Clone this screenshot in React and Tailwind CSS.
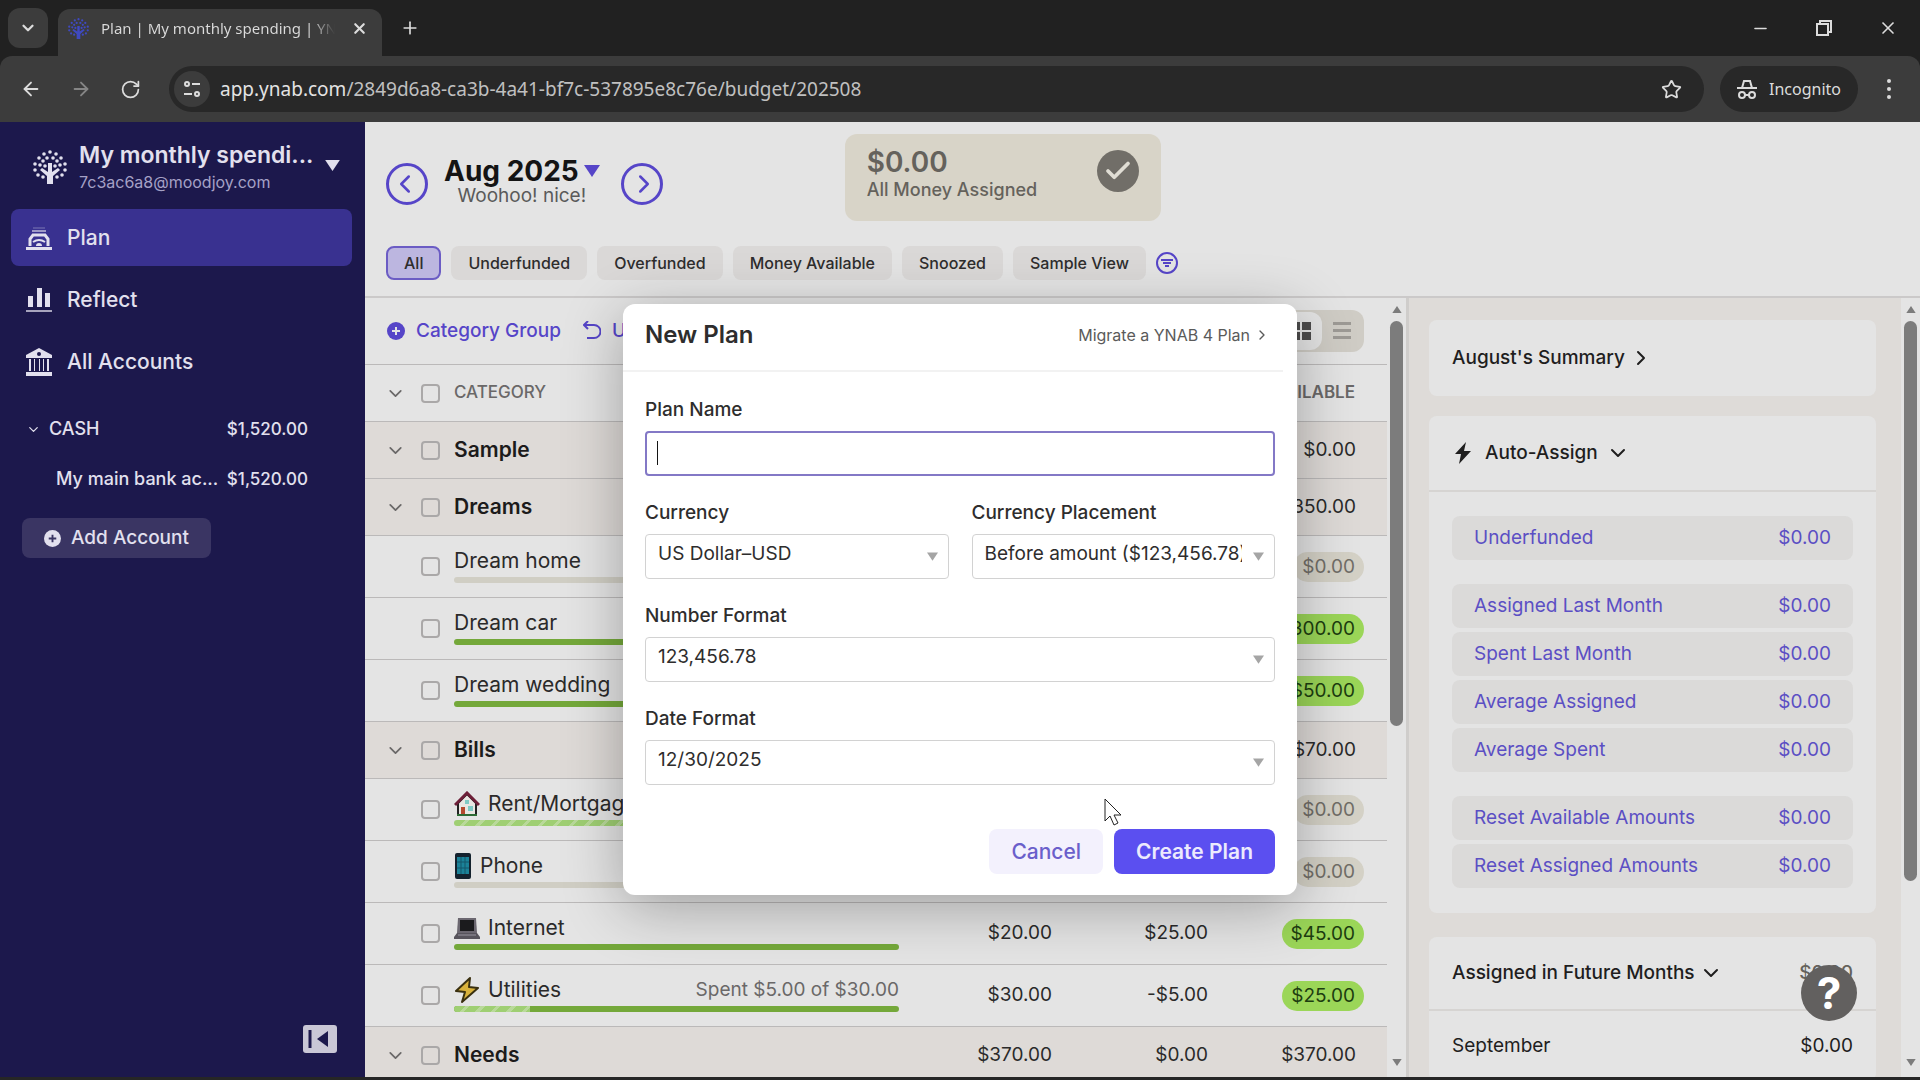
import React, { useState } from "react";
import {
  ArrowLeft,
  ArrowRight,
  Check,
  ChevronDown,
  ChevronLeft,
  ChevronRight,
  Minus,
  Plus,
  RotateCw,
  Star,
  X
} from "lucide-react";

const GROUP = "group";
const FUNDED = "funded";

const ROWS = [
  { type: GROUP, name: "Sample", available: "$0.00" },
  { type: GROUP, name: "Dreams", available: "$350.00" },
  { name: "Dream home", available: "$0.00" },
  { name: "Dream car", available: "$300.00", status: FUNDED },
  { name: "Dream wedding", available: "$50.00", status: FUNDED },
  { type: GROUP, name: "Bills", available: "$70.00" },
  { name: "Rent/Mortgage", icon: <House />, available: "$0.00", spent: 100 },
  { name: "Phone", icon: <Phone />, available: "$0.00" },
  {
    name: "Internet",
    icon: <Laptop />,
    assigned: "$20.00",
    activity: "$25.00",
    available: "$45.00",
    status: FUNDED
  },
  {
    name: "Utilities",
    icon: <Bolt />,
    note: "Spent $5.00 of $30.00",
    assigned: "$30.00",
    activity: "-$5.00",
    available: "$25.00",
    status: FUNDED,
    spent: 17
  },
  {
    type: GROUP,
    name: "Needs",
    assigned: "$370.00",
    activity: "$0.00",
    available: "$370.00"
  }
];

const FILTERS = [
  "All",
  "Underfunded",
  "Overfunded",
  "Money Available",
  "Snoozed",
  "Sample View"
];

const AUTO_ASSIGN = [
  ["Underfunded"],
  [
    "Assigned Last Month",
    "Spent Last Month",
    "Average Assigned",
    "Average Spent"
  ],
  ["Reset Available Amounts", "Reset Assigned Amounts"]
];

function Tree({ className }) {
  return (
    <svg viewBox="0 0 34 34" className={className} fill="currentColor">
      <path d="M14 34V26L7 20l2-2 6 4V13h4v9l6-4 2 2-7 6v8z" />
      <circle cx="17" cy="2" r="1.8" />
      <circle cx="11" cy="4" r="1.8" />
      <circle cx="23" cy="4" r="1.8" />
      <circle cx="6" cy="8" r="1.8" />
      <circle cx="28" cy="8" r="1.8" />
      <circle cx="14" cy="8" r="1.8" />
      <circle cx="20" cy="8" r="1.8" />
      <circle cx="2" cy="14" r="1.8" />
      <circle cx="32" cy="14" r="1.8" />
      <circle cx="10" cy="11" r="1.8" />
      <circle cx="24" cy="11" r="1.8" />
      <circle cx="7" cy="15" r="1.8" />
      <circle cx="27" cy="15" r="1.8" />
      <circle cx="12" cy="16" r="1.8" />
      <circle cx="22" cy="16" r="1.8" />
      <circle cx="2" cy="20" r="1.8" />
      <circle cx="32" cy="20" r="1.8" />
      <circle cx="5" cy="25" r="1.8" />
      <circle cx="29" cy="25" r="1.8" />
      <circle cx="10" cy="27" r="1.8" />
      <circle cx="24" cy="27" r="1.8" />
    </svg>
  );
}

function House() {
  return (
    <svg viewBox="0 0 26 26" className="h-[26px] w-[26px] shrink-0">
      <path d="M4 12L13 3l9 9v12H4z" fill="#e9e6e2" stroke="#222" strokeWidth="2" />
      <path d="M1 14L13 2l12 12" fill="none" stroke="#6d1f38" strokeWidth="3" />
      <path d="M7 16h4v8H7z" fill="#b5482e" />
      <path d="M14 15h5v5h-5zM11 9h4v4h-4z" fill="#7fc9c4" />
      <path d="M3 24h20" stroke="#2d6b35" strokeWidth="2" />
    </svg>
  );
}

function Phone() {
  return (
    <svg viewBox="0 0 18 26" className="h-[26px] w-[18px] shrink-0">
      <rect x="1" width="16" height="26" rx="2" fill="#14222e" />
      <rect x="3" y="4" width="12" height="17" fill="#1b8298" />
      <path d="M7 4v17M11 4v17M3 9h12M3 15h12" stroke="#14566a" />
    </svg>
  );
}

function Laptop() {
  return (
    <svg viewBox="0 0 26 26" className="h-[26px] w-[26px] shrink-0">
      <path d="M4 3h18l1 15H3z" fill="#6b6770" />
      <path d="M6 5h14v11H6z" fill="#1b1b1d" />
      <path d="M3 18h20l3 4v2H0v-2z" fill="#57545c" />
      <path d="M4 20h18" stroke="#98949e" />
    </svg>
  );
}

function Bolt() {
  return (
    <svg viewBox="0 0 26 26" className="h-[26px] w-[26px] shrink-0">
      <path
        d="M16 1L2 14l9 1-3 10 16-14-9-1z"
        fill="#d9b23c"
        stroke="#3a3010"
        strokeWidth="2"
        strokeLinejoin="round"
      />
    </svg>
  );
}

function Triangle({ className }) {
  return (
    <svg viewBox="0 0 16 12" className={className} fill="currentColor">
      <path d="M0 0h16L8 12z" />
    </svg>
  );
}

function PlusCircle({ className }) {
  return (
    <svg viewBox="0 0 18 18" className={className}>
      <circle cx="9" cy="9" r="9" fill="currentColor" stroke="none" />
      <path d="M9 5v8M5 9h8" strokeWidth="2" />
    </svg>
  );
}

function Browser() {
  return (
    <header className="shrink-0 bg-[#212121] font-['Noto_Sans',sans-serif] text-[#dcdcdc]">
      <div className="flex h-14 items-end">
        <button
          aria-label="Search tabs"
          className="mb-2 ml-2 flex h-10 w-10 items-center justify-center rounded-xl bg-[#3c3c3c]"
        >
          <ChevronDown size={18} strokeWidth={3} />
        </button>
        <div className="ml-[10px] flex h-[47px] w-[324px] items-center rounded-t-xl bg-[#3c3c3c] pb-2 pl-[10px] pr-[14px]">
          <Tree className="h-[21px] w-[21px] shrink-0 text-[#3f49c0]" />
          <div className="ml-3 min-w-0 grow overflow-hidden whitespace-nowrap bg-gradient-to-r from-[#dcdcdc] from-90% to-[#3c3c3c] bg-clip-text text-[15px] text-transparent">
            Plan | My monthly spending | YNAB
          </div>
          <button aria-label="Close tab" className="ml-4 shrink-0">
            <X size={17} strokeWidth={3} />
          </button>
        </div>
        <button aria-label="New tab" className="mb-[18px] ml-[18px]">
          <Plus size={20} strokeWidth={2} />
        </button>
        <div className="mb-[18px] ml-auto mr-[22px] flex items-center gap-[46px]">
          <button aria-label="Minimize">
            <Minus size={19} strokeWidth={2} />
          </button>
          <button aria-label="Restore">
            <svg viewBox="0 0 16 16" className="h-4 w-4" fill="none" stroke="currentColor" strokeWidth="2">
              <path d="M1 4h11v11H1zM4 4V1h11v11h-3" />
            </svg>
          </button>
          <button aria-label="Close">
            <X size={20} strokeWidth={2} />
          </button>
        </div>
      </div>
      <div className="flex h-[66px] items-center rounded-t-xl bg-[#3c3c3c] pl-5 pr-7">
        <button aria-label="Back">
          <ArrowLeft size={22} />
        </button>
        <button aria-label="Forward" className="ml-7 text-[#858585]">
          <ArrowRight size={22} />
        </button>
        <button aria-label="Reload" className="ml-7">
          <RotateCw size={21} />
        </button>
        <div className="ml-7 flex h-[46px] grow items-center rounded-full bg-[#282828] pl-[5px] pr-[22px]">
          <button
            aria-label="Site information"
            className="flex h-9 w-9 items-center justify-center rounded-full bg-[#3c3c3c]"
          >
            <svg viewBox="0 0 18 18" className="h-[18px] w-[18px]" fill="none" stroke="currentColor" strokeWidth="2">
              <circle cx="4" cy="4" r="2" />
              <circle cx="14" cy="14" r="2" />
              <path d="M9 4h8M1 14h8" />
            </svg>
          </button>
          <div className="ml-[10px] grow text-[19px] text-[#c0c0c0]">
            <span className="text-[#e3e3e3]">app.ynab.com</span>
            /2849d6a8-ca3b-4a41-bf7c-537895e8c76e/budget/202508
          </div>
          <button aria-label="Bookmark">
            <Star size={21} />
          </button>
        </div>
        <div className="ml-4 flex h-[46px] items-center gap-3 rounded-full bg-[#282828] pl-[17px] pr-[17px] text-base">
          <svg viewBox="0 0 20 20" className="h-5 w-5" fill="none" stroke="currentColor" strokeWidth="2">
            <path d="M5 9l2-7h6l2 7M0 9h20" />
            <circle cx="5" cy="16" r="3" />
            <circle cx="15" cy="16" r="3" />
            <path d="M8 16h4" />
          </svg>
          Incognito
        </div>
        <button aria-label="Menu" className="ml-7">
          <svg viewBox="0 0 6 22" className="h-[22px] w-[6px]" fill="currentColor">
            <circle cx="3" cy="3" r="2" />
            <circle cx="3" cy="11" r="2" />
            <circle cx="3" cy="19" r="2" />
          </svg>
        </button>
      </div>
    </header>
  );
}

function Sidebar() {
  return (
    <nav className="flex w-[365px] shrink-0 flex-col bg-[#1c184c] px-[11px] text-[#e2e0ee]">
      <button className="mt-[18px] flex h-[69px] items-start pl-[22px] text-left">
        <Tree className="mt-[10px] h-[34px] w-[34px] shrink-0" />
        <div className="ml-3 w-[237px] whitespace-nowrap">
          <div className="text-[23px] font-semibold leading-[30px]">
            My monthly spendi...
          </div>
          <div className="text-base leading-6 text-[#a5a1c6]">
            7c3ac6a8@moodjoy.com
          </div>
        </div>
        <Triangle className="ml-2 mt-5 h-[11px] w-[17px]" />
      </button>
      <div className="flex flex-col gap-[5px] text-[21px] font-medium">
        <a href="#plan" className="mr-[2px] flex h-[57px] items-center gap-[15px] rounded-lg bg-[#393190] pl-[15px]">
          <svg viewBox="0 0 26 24" className="h-6 w-[26px]" fill="none">
            <path d="M7 2h12" stroke="currentColor" opacity=".4" />
            <path d="M6 5h14" stroke="currentColor" strokeWidth="2" opacity=".6" />
            <path d="M4 20v-7l3-4h12l3 4v7" stroke="currentColor" strokeWidth="3" />
            <path d="M7 16q6-4 12 0" stroke="currentColor" strokeWidth="2" />
            <path d="M10 20a3 3 0 0 1 6 0z" fill="currentColor" />
            <path d="M0 21h26v3H0z" fill="currentColor" />
          </svg>
          Plan
        </a>
        <a href="#reflect" className="flex h-[57px] items-center gap-[15px] pl-[15px]">
          <svg viewBox="0 0 26 24" className="h-6 w-[26px]" fill="currentColor">
            <path d="M2 8h5v11H2zM11 0h5v19h-5zM19 5h5v14h-5z" />
            <path d="M0 22h26v2H0z" opacity=".7" />
          </svg>
          Reflect
        </a>
        <a href="#accounts" className="flex h-[57px] items-center gap-[15px] pl-[15px]">
          <svg viewBox="0 0 26 28" className="h-7 w-[26px]" fill="currentColor">
            <path d="M13 0l13 7v3H0V7z" />
            <path d="M3 11h2v12H3zM8 11h1v12H8zM13 11h1v12h-1zM17 11h1v12h-1zM21 11h2v12h-2z" />
            <path d="M0 24h26v4H0z" />
            <circle cx="13" cy="6" r="2" fill="#1c184c" />
          </svg>
          All Accounts
        </a>
      </div>
      <button className="mt-6 flex h-[30px] items-center pl-[15px] pr-[46px] text-lg font-medium">
        <ChevronDown size={15} className="mr-2" />
        CASH
        <span className="ml-auto text-[17px]">$1,520.00</span>
      </button>
      <a href="#bank" className="mt-5 flex h-[30px] items-center whitespace-nowrap pl-[45px] pr-[46px] text-lg font-medium">
        My main bank ac...
        <span className="ml-auto text-[17px]">$1,520.00</span>
      </a>
      <button className="ml-[11px] mt-6 flex h-10 w-[189px] items-center gap-[10px] rounded-lg bg-[#3a3563] pl-[22px] text-[19px] font-medium">
        <PlusCircle className="h-[17px] w-[17px] stroke-[#3a3563]" />
        Add Account
      </button>
      <button aria-label="Collapse sidebar" className="mb-6 ml-auto mr-[17px] mt-auto">
        <svg viewBox="0 0 34 28" className="h-7 w-[34px]">
          <rect width="34" height="28" rx="3" fill="#c9c7d6" />
          <path d="M7 5v18" stroke="#1c184c" strokeWidth="3" />
          <path d="M25 6v16l-11-8z" fill="#1c184c" />
        </svg>
      </button>
    </nav>
  );
}

function PlanHeader() {
  const [filter, setFilter] = useState("All");

  return (
    <div className="h-[176px] shrink-0 border-b-2 border-[#cbc9c9] px-[21px] pt-3">
      <div className="flex h-[87px] items-start">
        <button
          aria-label="Previous month"
          className="mt-[29px] flex h-[42px] w-[42px] items-center justify-center rounded-full border-3 border-[#5645c8] text-[#5645c8]"
        >
          <ChevronLeft size={30} className="-ml-1" />
        </button>
        <div className="ml-4 mt-5 text-center">
          <button className="flex items-center text-[28px] font-bold leading-[34px] text-[#141414]">
            Aug 2025
            <Triangle className="ml-[5px] h-3 w-4 text-[#5645c8]" />
          </button>
          <div className="-mt-1 text-[19px] leading-6 text-[#5a5a5a]">
            Woohoo! nice!
          </div>
        </div>
        <button
          aria-label="Next month"
          className="ml-[21px] mt-[29px] flex h-[42px] w-[42px] items-center justify-center rounded-full border-3 border-[#5645c8] text-[#5645c8]"
        >
          <ChevronRight size={30} className="-mr-1" />
        </button>
        <div className="ml-[182px] flex h-[87px] w-[316px] justify-between rounded-xl bg-[#d8d4c8] px-[22px] pt-3 text-[#65625c]">
          <div>
            <div className="text-[28px] font-semibold leading-8">$0.00</div>
            <div className="text-lg font-medium leading-6">
              All Money Assigned
            </div>
          </div>
          <div className="mt-1 flex h-[42px] w-[42px] items-center justify-center rounded-full bg-[#716e68] text-[#e0ddd4]">
            <Check size={30} strokeWidth={3} />
          </div>
        </div>
      </div>
      <div className="mt-[25px] flex items-center gap-[10px] text-base font-medium text-[#2e2d2d]">
        {FILTERS.map((name) => (
          <button
            key={name}
            onClick={() => setFilter(name)}
            className={
              name === filter
                ? "h-[34px] rounded-lg border-2 border-[#6b5cc4] bg-[#bcb6e0] px-4"
                : "h-[34px] rounded-lg bg-[#dad8d7] px-[17px]"
            }
          >
            {name}
          </button>
        ))}
        <button aria-label="Edit views" className="text-[#5645c8]">
          <svg viewBox="0 0 22 22" className="h-[22px] w-[22px]" fill="none" stroke="currentColor" strokeWidth="2">
            <circle cx="11" cy="11" r="10" />
            <path d="M5 8h12M7 11h8M9 14h4" />
          </svg>
        </button>
      </div>
    </div>
  );
}

function Box({ label }) {
  return (
    <input
      type="checkbox"
      aria-label={label}
      className="block h-[19px] w-[19px] appearance-none rounded-[4px] border-2 border-[#aaa8a8]"
    />
  );
}

function Progress({ status, spent }) {
  return (
    <div
      className={
        "mt-[2px] h-[6px] overflow-hidden rounded-full " +
        (status === FUNDED ? "bg-[#74a83a]" : "bg-[#d0cec4]")
      }
    >
      {spent && (
        <div
          className="h-full bg-[repeating-linear-gradient(135deg,#9fcf73_0_8px,#b9d99a_8px_11px)]"
          style={{ width: spent + "%" }}
        />
      )}
    </div>
  );
}

function Amount({ status, children }) {
  return (
    <span
      className={
        "inline-block h-[30px] rounded-full px-[9px] leading-[30px] " +
        (status === FUNDED
          ? "bg-[#9bd658] text-[#1d3d10]"
          : "bg-[#d4d1c6] text-[#716e68]")
      }
    >
      {children}
    </span>
  );
}

function Scrollbar({ className }) {
  return (
    <div className="flex w-[19px] shrink-0 flex-col items-center bg-[#e4e4e4] text-[#7c7c7c]">
      <Triangle className="mt-2 h-[7px] w-3 rotate-180" />
      <div className={className} />
      <Triangle className="mb-[11px] mt-auto h-[7px] w-3" />
    </div>
  );
}

function Budget() {
  return (
    <div className="flex min-h-0 grow">
      <div className="min-w-0 grow overflow-hidden">
        <div className="flex h-[66px] items-center pl-[22px] pr-[23px] text-[19px] font-medium text-[#5645c8]">
          <button className="flex items-center gap-[11px]">
            <PlusCircle className="h-[18px] w-[18px] stroke-[#e4e4e4]" />
            Category Group
          </button>
          <button className="ml-[22px] flex items-center gap-[11px]">
            <svg viewBox="0 0 18 20" className="h-5 w-[18px]" fill="none" stroke="currentColor" strokeWidth="2">
              <path d="M2 4h9a6 6 0 0 1 0 13H4" />
              <path d="M5 0L1 4l4 4" />
            </svg>
            Undo
          </button>
          <div className="ml-auto flex h-[42px] w-[86px] items-center rounded-xl bg-[#cfccc5] p-[2px] text-[#4d4c4c]">
            <button
              aria-label="Card view"
              className="flex h-full w-[42px] items-center justify-center rounded-xl bg-[#e4e4e4]"
            >
              <svg viewBox="0 0 20 18" className="h-[18px] w-5" fill="currentColor">
                <path d="M0 0h9v8H0zM11 0h9v8h-9zM0 10h9v8H0zM11 10h9v8h-9z" />
              </svg>
            </button>
            <button aria-label="List view" className="flex grow justify-center text-[#9d9a95]">
              <svg viewBox="0 0 18 18" className="h-[18px] w-[18px]" fill="currentColor">
                <path d="M0 0h18v3H0zM0 7h18v3H0zM0 14h18v3H0z" />
              </svg>
            </button>
          </div>
        </div>
        <table className="w-full table-fixed text-left text-[#2b2a2a]">
          <colgroup>
            <col className="w-[56px]" />
            <col className="w-[33px]" />
            <col />
            <col className="w-[153px]" />
            <col className="w-[156px]" />
            <col className="w-[179px]" />
          </colgroup>
          <thead>
            <tr className="h-[57px] border-y border-[#bbb9b9] text-[17px] text-[#6a6868]">
              <td className="pl-5">
                <ChevronDown size={21} />
              </td>
              <td>
                <Box label="Select all" />
              </td>
              <th className="font-medium">CATEGORY</th>
              <th className="text-right font-medium">ASSIGNED</th>
              <th className="text-right font-medium">ACTIVITY</th>
              <th className="pr-8 text-right font-semibold">AVAILABLE</th>
            </tr>
          </thead>
          <tbody>
            {ROWS.map((row) => {
              if (row.type === GROUP) {
                return (
                  <tr key={row.name} className="h-[57px] border-b border-[#bbb9b9] bg-[#dedad7] text-[19px]">
                    <td className="pl-5 text-[#6a6868]">
                      <ChevronDown size={21} />
                    </td>
                    <td>
                      <Box label={row.name} />
                    </td>
                    <th className="text-[21px] font-semibold text-[#1c1b1b]">
                      {row.name}
                    </th>
                    <td className="text-right">{row.assigned}</td>
                    <td className="text-right">{row.activity}</td>
                    <td className="pr-[31px] text-right">{row.available}</td>
                  </tr>
                );
              }
              return (
                <tr key={row.name} className="h-[62px] border-b border-[#bbb9b9] text-[19px]">
                  <td />
                  <td>
                    <Box label={row.name} />
                  </td>
                  <td className="pt-[11px] align-top">
                    <div className="flex h-7 items-center gap-2 whitespace-nowrap text-[21px]">
                      {row.icon}
                      {row.name}
                      <span className="ml-auto text-[19px] text-[#6a6868]">
                        {row.note}
                      </span>
                    </div>
                    <Progress status={row.status} spent={row.spent} />
                  </td>
                  <td className="text-right">{row.assigned}</td>
                  <td className="text-right">{row.activity}</td>
                  <td className="pr-[23px] text-right">
                    <Amount status={row.status}>{row.available}</Amount>
                  </td>
                </tr>
              );
            })}
          </tbody>
        </table>
      </div>
      <Scrollbar className="mt-2 h-[405px] w-[13px] rounded-full bg-[#7c7c7c]" />
    </div>
  );
}

function Inspector() {
  return (
    <aside className="flex w-[514px] shrink-0 border-l-3 border-[#cfcdcb] bg-[#dedbd8]">
      <div className="flex min-w-0 grow flex-col gap-5 overflow-hidden pl-5 pr-[25px] pt-[22px] text-[19px] text-[#1f1e1e]">
        <section className="flex h-[76px] shrink-0 items-center rounded-lg bg-[#e4e4e4] pl-[23px]">
          <button className="flex items-center gap-1 font-medium">
            August's Summary
            <ChevronRight size={24} />
          </button>
        </section>
        <section className="shrink-0 rounded-lg bg-[#e4e4e4] pb-[25px]">
          <button className="flex h-[76px] w-full items-center border-b-2 border-[#d6d4d2] pl-[26px] font-medium">
            <svg viewBox="0 0 16 22" className="mr-[14px] h-[22px] w-4" fill="currentColor">
              <path d="M11 0L0 12h6L4 22l12-13H9z" />
            </svg>
            Auto-Assign
            <ChevronDown size={24} className="ml-2" />
          </button>
          {AUTO_ASSIGN.map((group) => (
            <div key={group[0]} className="flex flex-col gap-1 px-[23px] pt-6 text-[#5b4fc4]">
              {group.map((name) => (
                <button
                  key={name}
                  className="flex h-11 items-center justify-between rounded-lg bg-[#dbdad9] px-[22px]"
                >
                  {name}
                  <span>$0.00</span>
                </button>
              ))}
            </div>
          ))}
        </section>
        <section className="mt-1 shrink-0 rounded-lg bg-[#e4e4e4]">
          <button className="flex h-[74px] w-full items-center border-b-2 border-[#d6d4d2] px-[23px] font-medium">
            Assigned in Future Months
            <ChevronDown size={24} className="ml-1" />
            <span className="ml-auto text-[#65625c]">$0.00</span>
          </button>
          <div className="flex h-[70px] items-center justify-between px-[23px]">
            <span>September</span>
            <span>$0.00</span>
          </div>
        </section>
      </div>
      <Scrollbar className="mt-2 h-[560px] w-[13px] rounded-full bg-[#7c7c7c]" />
    </aside>
  );
}

function Select({ id, label, option }) {
  return (
    <div className="min-w-0 grow basis-0">
      <label htmlFor={id} className="block text-[19px] font-medium leading-7">
        {label}
      </label>
      <div className="relative mt-[7px]">
        <select
          id={id}
          className="block h-[45px] w-full appearance-none rounded-[4px] border border-[#d2d2d2] bg-white pb-1 pl-3 pr-8 text-[19px]"
        >
          <option>{option}</option>
        </select>
        <Triangle className="pointer-events-none absolute right-[11px] top-[18px] h-[9px] w-[11px] text-[#a5a5a5]" />
      </div>
    </div>
  );
}

function NewPlan() {
  const [name, setName] = useState("");

  return (
    <div className="absolute inset-0 flex items-center justify-center">
      <form
        onSubmit={(e) => e.preventDefault()}
        className="w-[674px] rounded-xl bg-white text-[#2e2d2d] shadow-[0_12px_60px_rgba(0,0,0,0.3)]"
      >
        <div className="mr-[14px] flex h-[68px] items-center justify-between border-b-2 border-[#f2f2f2] pb-1 pl-[22px] pr-[13px]">
          <h1 className="text-2xl font-semibold">New Plan</h1>
          <a href="#migrate" className="flex items-center gap-1 text-base text-[#5a5a5a]">
            Migrate a YNAB 4 Plan
            <ChevronRight size={16} />
          </a>
        </div>
        <div className="flex flex-col gap-[23px] px-[22px] pt-6">
          <div>
            <label htmlFor="name" className="block text-[19px] font-medium leading-7">
              Plan Name
            </label>
            <div className="relative mt-[7px]">
              <input
                id="name"
                value={name}
                onChange={(e) => setName(e.target.value)}
                className="block h-[45px] w-full rounded-[4px] border-2 border-[#8378c6] px-[11px] text-[19px] outline-none"
              />
              {!name && (
                <div className="pointer-events-none absolute left-3 top-[10px] h-6 w-px bg-[#141414]" />
              )}
            </div>
          </div>
          <div className="flex gap-[23px]">
            <Select id="currency" label="Currency" option="US Dollar–USD" />
            <Select
              id="placement"
              label="Currency Placement"
              option="Before amount ($123,456.78)"
            />
          </div>
          <Select id="number" label="Number Format" option="123,456.78" />
          <Select id="date" label="Date Format" option="12/30/2025" />
        </div>
        <div className="flex justify-end gap-[11px] px-[22px] pb-[21px] pt-11 text-[21px]">
          <button type="button" className="h-[45px] rounded-lg bg-[#f3f1fd] px-[22px] font-medium text-[#6a5fcb]">
            Cancel
          </button>
          <button type="submit" className="h-[45px] rounded-lg bg-[#5b4ff0] px-[22px] font-semibold text-[#eceafd]">
            Create Plan
          </button>
        </div>
      </form>
    </div>
  );
}

export default function App() {
  return (
    <div className="flex h-screen flex-col overflow-hidden border-b-3 border-[#262626] bg-[#e4e4e4]">
      <Browser />
      <div className="relative flex min-h-0 grow font-['Inter',sans-serif]">
        <Sidebar />
        <main className="flex min-w-0 grow flex-col">
          <PlanHeader />
          <div className="flex min-h-0 grow">
            <div className="flex min-w-0 grow">
              <Budget />
            </div>
            <Inspector />
          </div>
        </main>
        <button
          aria-label="Help"
          className="absolute bottom-14 right-[63px] flex h-14 w-14 items-center justify-center rounded-full bg-[#62605f] text-[44px] font-bold text-white"
        >
          ?
        </button>
        <NewPlan />
        <svg viewBox="0 0 18 28" className="absolute left-[1104px] top-[676px] h-7 w-[18px]">
          <path
            d="M1 1v22l5-5 4 9 4-2-4-8h7z"
            fill="white"
            stroke="#222"
            strokeWidth="1"
          />
        </svg>
      </div>
    </div>
  );
}
